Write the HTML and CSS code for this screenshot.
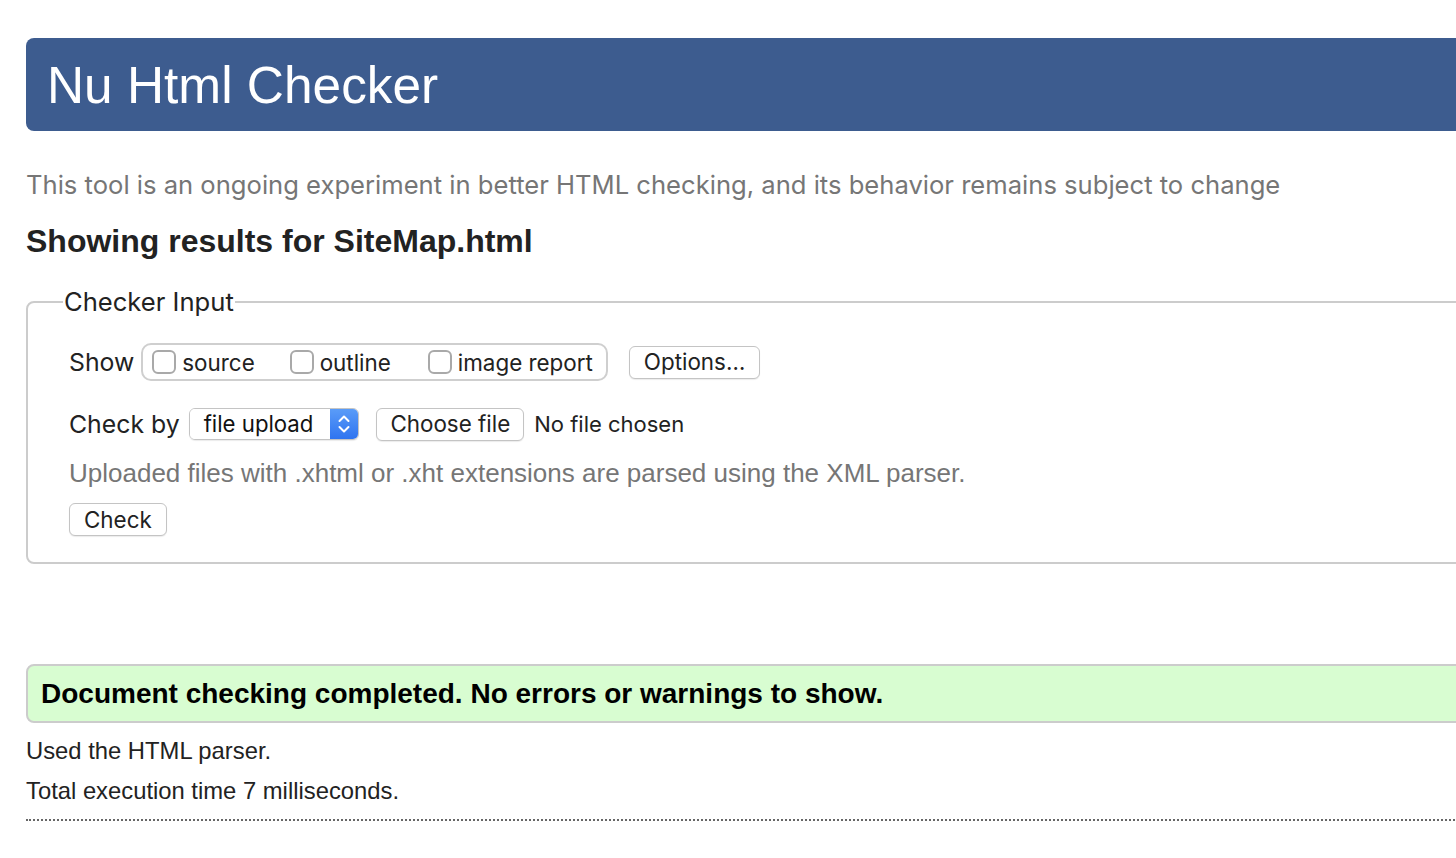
FILE: index.html
```html
<!DOCTYPE html>
<html lang="en">
<head>
<meta charset="utf-8">
<title>Showing results for SiteMap.html - Nu Html Checker</title>
<link rel="stylesheet" href="styles.css">
</head>
<body>
<div class="page">
  <header class="banner">
    <h1 class="title">Nu Html Checker</h1>
  </header>
  <p class="intro">This tool is an ongoing experiment in better HTML checking, and its behavior remains subject to change</p>
  <h2 class="results-title">Showing results for SiteMap.html</h2>

  <form class="checker">
    <fieldset class="checker-input">
      <legend class="legend">Checker Input</legend>

      <div class="row row-show">
        <span class="label">Show</span>
        <span class="show-group">
          <label class="opt opt-source"><span class="checkbox"></span>source</label>
          <label class="opt opt-outline"><span class="checkbox"></span>outline</label>
          <label class="opt opt-image"><span class="checkbox"></span>image report</label>
        </span>
        <button type="button" class="btn btn-options">Options…</button>
      </div>

      <div class="row row-check">
        <span class="label">Check by</span>
        <span class="select">
          <span class="select-text">file upload</span>
          <span class="select-arrow">
            <svg width="14" height="22" viewBox="0 0 14 22" aria-hidden="true">
              <path d="M2.5 8 L7 3.5 L11.5 8" fill="none" stroke="#fff" stroke-width="2" stroke-linecap="round" stroke-linejoin="round"/>
              <path d="M2.5 14 L7 18.5 L11.5 14" fill="none" stroke="#fff" stroke-width="2" stroke-linecap="round" stroke-linejoin="round"/>
            </svg>
          </span>
        </span>
        <button type="button" class="btn btn-file">Choose file</button>
        <span class="file-status">No file chosen</span>
      </div>

      <p class="hint">Uploaded files with .xhtml or .xht extensions are parsed using the XML parser.</p>

      <button type="button" class="btn btn-check">Check</button>
    </fieldset>
  </form>

  <div class="success">
    <p class="success-text">Document checking completed. No errors or warnings to show.</p>
  </div>

  <p class="stat">Used the HTML parser.</p>
  <p class="stat">Total execution time 7 milliseconds.</p>
  <hr class="dotted">
</div>
</body>
</html>
```

FILE: styles.css
```css
html {
  overflow: hidden;
}

body {
  margin: 0;
  background: #ffffff;
  color: #222222;
  font-family: "Liberation Sans", Arial, sans-serif;
}

.page {
  width: 1500px;
  padding: 38px 0 0 26px;
}

.banner {
  height: 93px;
  background: #3d5c8f;
  border-radius: 8px;
  display: flex;
  align-items: center;
  padding-left: 21px;
}

.title {
  margin: 0;
  color: #ffffff;
  font-family: "Liberation Sans", Arial, sans-serif;
  font-weight: normal;
  font-size: 51.4px;
  line-height: 60px;
}

.intro {
  margin: 39px 0 0;
  font-family: Inter, "Liberation Sans", sans-serif;
  font-size: 25.6px;
  line-height: 30px;
  color: #767676;
}

.results-title {
  margin: 23px 0 0;
  font-family: "Liberation Sans", Arial, sans-serif;
  font-weight: bold;
  font-size: 32px;
  line-height: 36px;
  color: #222222;
}

.checker {
  margin: 27px 0 0;
}

.checker-input {
  margin: 0;
  border: 2px solid #cccccc;
  border-radius: 8px;
  padding: 25px 20px 26px 41px;
  min-width: 0;
}

.legend {
  padding: 0 1px;
  margin-left: -6px;
  font-family: Inter, "Liberation Sans", sans-serif;
  font-size: 25.6px;
  line-height: 32px;
  color: #222222;
}

.row {
  display: flex;
  align-items: center;
}

.label {
  font-family: Inter, "Liberation Sans", sans-serif;
  font-size: 24.8px;
  color: #222222;
}

.row-show {
  height: 38px;
}

.show-group {
  display: flex;
  align-items: center;
  height: 38px;
  box-sizing: border-box;
  margin-left: 7px;
  border: 2px solid #cfcfcf;
  border-radius: 10px;
  padding: 0 13px 0 9px;
}

.opt {
  display: flex;
  align-items: center;
  font-family: Inter, "Liberation Sans", sans-serif;
  font-size: 22.4px;
  color: #222222;
}

.opt-outline {
  margin-left: 35px;
}

.opt-image {
  margin-left: 37px;
}

.checkbox {
  width: 20px;
  height: 20px;
  border: 2px solid #a9a9a9;
  border-radius: 6px;
  background: #ffffff;
  margin-right: 6px;
}

.btn {
  font-family: Inter, "Liberation Sans", sans-serif;
  font-size: 22.4px;
  color: #222222;
  background: #ffffff;
  border: 1.5px solid #c4c4c4;
  border-radius: 6px;
  box-shadow: 0 1px 1px rgba(0, 0, 0, 0.08);
  height: 33px;
  padding: 0 13px;
  line-height: 30px;
}

.btn-options {
  margin-left: 21px;
  padding: 0 14px;
}

.row-check {
  margin-top: 26px;
  height: 34px;
}

.select {
  display: flex;
  align-items: stretch;
  height: 32px;
  margin-left: 9px;
  box-sizing: border-box;
  border: 1.5px solid #c4c4c4;
  border-radius: 6px;
  overflow: hidden;
  box-shadow: 0 1px 1px rgba(0, 0, 0, 0.08);
}

.select-text {
  font-family: Inter, "Liberation Sans", sans-serif;
  font-size: 22.2px;
  color: #111111;
  line-height: 29px;
  padding: 0 17px 0 14px;
  background: #ffffff;
}

.select-arrow {
  width: 28px;
  display: flex;
  align-items: center;
  justify-content: center;
  background: linear-gradient(#5a9cf8, #2f74f0);
}

.btn-file {
  margin-left: 17px;
  padding: 0 13px;
}

.file-status {
  margin-left: 10px;
  font-family: Inter, "Liberation Sans", sans-serif;
  font-size: 22px;
  color: #222222;
}

.hint {
  margin: 17px 0 0;
  font-family: "Liberation Sans", Arial, sans-serif;
  font-size: 26px;
  line-height: 30px;
  color: #767676;
}

.btn-check {
  margin-top: 15px;
  padding: 0 14px;
}

.success {
  margin-top: 100px;
  height: 59px;
  box-sizing: border-box;
  background: #d8fdd1;
  border: 2px solid #cccccc;
  border-radius: 8px;
  display: flex;
  align-items: center;
  padding-left: 13px;
}

.success-text {
  margin: 0;
  font-family: "Liberation Sans", Arial, sans-serif;
  font-weight: bold;
  font-size: 28px;
  color: #000000;
}

.stat {
  margin: 0;
  font-family: "Liberation Sans", Arial, sans-serif;
  font-size: 23.8px;
  line-height: 40px;
  color: #222222;
}

.success + .stat {
  margin-top: 8px;
}

.dotted {
  margin: 8px 0 0;
  border: 0;
  border-top: 2px dotted #666666;
  height: 0;
}
```
